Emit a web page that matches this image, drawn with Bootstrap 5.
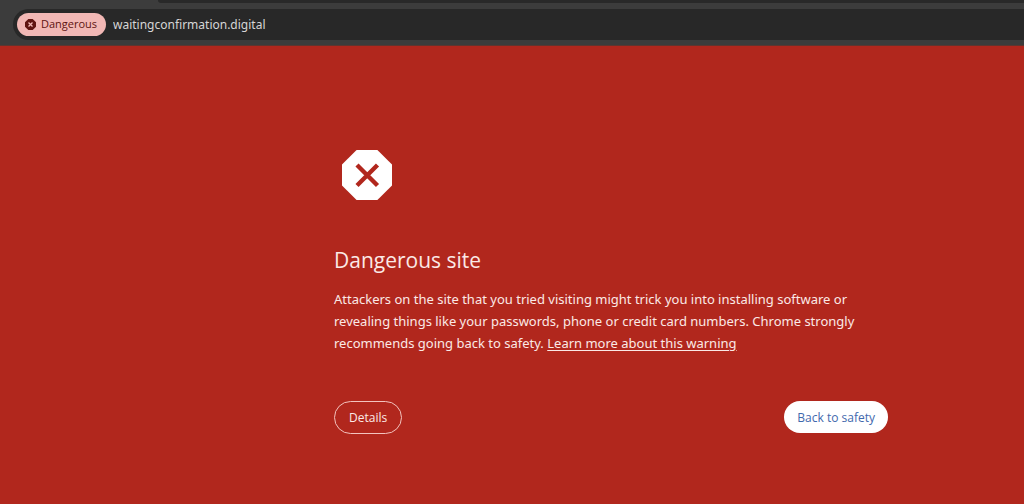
<!DOCTYPE html>
<html lang="en">
<head>
<meta charset="utf-8">
<meta name="viewport" content="width=device-width, initial-scale=1">
<title>Dangerous site</title>
<link href="https://cdn.jsdelivr.net/npm/bootstrap@5.3.0/dist/css/bootstrap.min.css" rel="stylesheet">
<style>
  body { background: #b1271d; color: #fbe9e6; font-family: "Open Sans", "Noto Sans", sans-serif; }
  .toolbar { background: #3c3c3c; padding: 0 0 5px 13px; border-bottom: 1px solid #5f352f; }
  .tab-edge { height: 3px; margin-left: 145px; background: #292929; border-bottom-left-radius: 8px; }
  .omnibox { background: #282828; height: 31px; margin-top: 6px; padding-left: 4px; border-radius: 16px 0 0 16px; }
  .danger-chip { background: #f2b8b5; color: #601410; height: 23px; width: 89px; padding: 0 0 0 8px; font-size: 11px; gap: 5px; }
  .address, .message { font-family: "Noto Sans", sans-serif; }
  .address { background: transparent; color: #d6d6d6; font-size: 12px; line-height: 20px; margin-left: 7px; outline: 0; }
  .warning { max-width: 888px; padding: 96px 0 32px 334px; }
  .stop-sign { margin: 8px 0 0 8px; }
  h1 { font-size: 21px; line-height: 32px; margin: 44px 0 12px; }
  .message { font-size: 13px; line-height: 22px; max-width: 528px; margin: 0; }
  .message a { color: inherit; text-underline-offset: 2px; }
  .actions { margin-top: 47px; }
  .actions .btn { font-size: 12px; line-height: 18px; padding: 7px 14px 6px; }
  .btn-details { --bs-btn-color: #fbe9e6; --bs-btn-border-color: #f3c3be; --bs-btn-hover-color: #fff; --bs-btn-hover-border-color: #fff; }
  .actions .btn-safety { --bs-btn-color: #3f69ad; --bs-btn-bg: #fff; --bs-btn-hover-color: #3f69ad; --bs-btn-hover-bg: #f3f3f3; padding: 7px 12px 5px; }
</style>
</head>
<body>
<header class="toolbar">
  <div class="tab-edge"></div>
  <div class="omnibox d-flex align-items-center">
    <button type="button" class="danger-chip btn border-0 rounded-pill d-flex align-items-center flex-shrink-0">
      <svg width="11" height="11" viewBox="0 0 11 11" aria-hidden="true"><path fill="#601410" d="M3.3 0h4.4L11 3.3v4.4L7.7 11H3.3L0 7.7V3.3z"/><path stroke="#f2b8b5" stroke-width="1.3" d="m3.5 3.5 4 4m0-4-4 4"/></svg>
      <span>Dangerous</span>
    </button>
    <input class="address border-0 p-0 flex-grow-1" type="text" aria-label="Address" value="waitingconfirmation.digital">
  </div>
</header>
<main class="warning">
  <svg class="stop-sign d-block" width="50" height="50" viewBox="0 0 50 50" aria-hidden="true"><path fill="#fff" d="M14.6 0h20.8L50 14.6v20.8L35.4 50H14.6L0 35.4V14.6z"/><path stroke="#b1271d" stroke-width="4.4" d="m15 15 20.5 20.5m0-20.5L15 35.5"/></svg>
  <h1 class="fw-normal">Dangerous site</h1>
  <p class="message">Attackers on the site that you tried visiting might trick you into installing software or revealing things like your passwords, phone or credit card numbers. Chrome strongly recommends going back to safety. <a href="#">Learn more about this warning</a></p>
  <div class="actions d-flex justify-content-between align-items-start">
    <button type="button" class="btn btn-details rounded-pill">Details</button>
    <button type="button" class="btn btn-safety rounded-pill">Back to safety</button>
  </div>
</main>
<script src="https://cdn.jsdelivr.net/npm/bootstrap@5.3.0/dist/js/bootstrap.bundle.min.js"></script>
</body>
</html>
